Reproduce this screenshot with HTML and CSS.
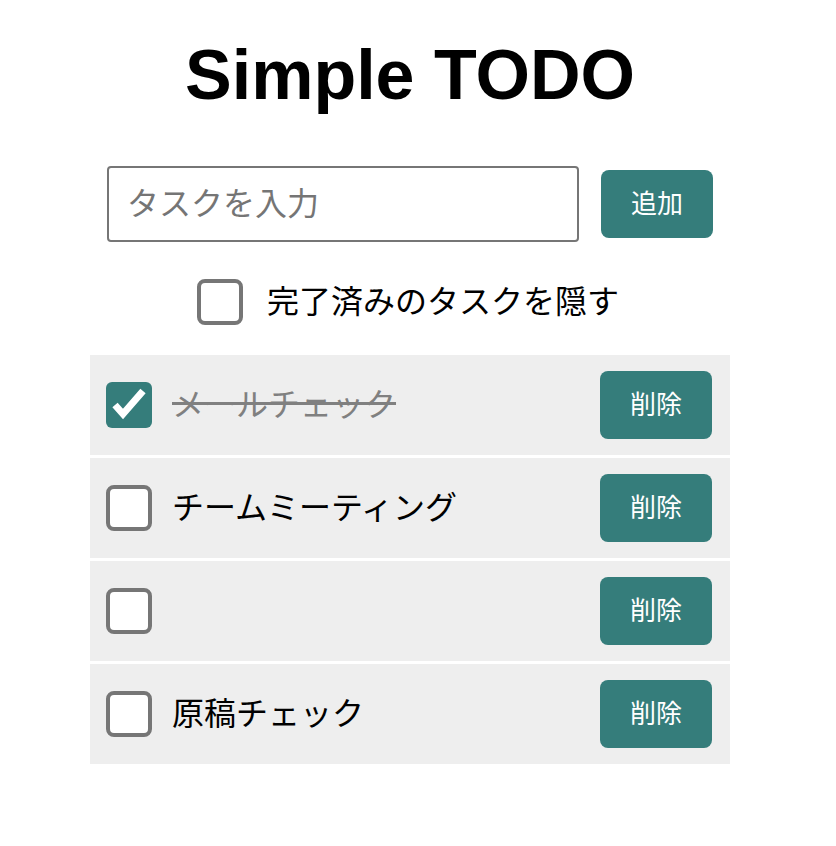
FILE: index.html
```html
<!DOCTYPE html>
<html lang="ja">
<head>
<meta charset="utf-8">
<title>Simple TODO</title>
<link rel="stylesheet" href="styles.css">
</head>
<body>
<div class="page">
  <h1 class="title">Simple TODO</h1>
  <form class="add-row">
    <input class="task-input" type="text" placeholder="タスクを入力">
    <button class="btn" type="button">追加</button>
  </form>
  <label class="hide-row">
    <span class="box"></span>
    <span class="hide-label">完了済みのタスクを隠す</span>
  </label>
  <ul class="list">
    <li class="item">
      <span class="box checked">
        <svg viewBox="0 0 46 46" width="46" height="46"><polyline points="9,23 17,32 37,9" fill="none" stroke="#fff" stroke-width="7" stroke-linejoin="miter"/></svg>
      </span>
      <span class="item-text done">メールチェック</span>
      <button class="btn" type="button">削除</button>
    </li>
    <li class="item">
      <span class="box"></span>
      <span class="item-text">チームミーティング</span>
      <button class="btn" type="button">削除</button>
    </li>
    <li class="item">
      <span class="box"></span>
      <span class="item-text"></span>
      <button class="btn" type="button">削除</button>
    </li>
    <li class="item">
      <span class="box"></span>
      <span class="item-text">原稿チェック</span>
      <button class="btn" type="button">削除</button>
    </li>
  </ul>
</div>
</body>
</html>
```

FILE: styles.css
```css
html, body {
  margin: 0;
  padding: 0;
  background: #ffffff;
}
body {
  font-family: "Noto Sans CJK JP", "Noto Sans", sans-serif;
  color: #000;
}
.page {
  width: 820px;
  display: flex;
  flex-direction: column;
  align-items: center;
}
.title {
  margin: 35px 0 0;
  font-family: "Liberation Sans", Arial, sans-serif;
  font-weight: bold;
  font-size: 70px;
  line-height: 80px;
  height: 80px;
}
.add-row {
  margin: 51px 0 0;
  display: flex;
  align-items: center;
  gap: 22px;
}
.task-input {
  box-sizing: border-box;
  width: 472px;
  height: 76px;
  border: 2px solid #767676;
  border-radius: 4px;
  padding: 0 18px 6px;
  font-family: "Noto Sans CJK JP", sans-serif;
  font-size: 32px;
  outline: none;
}
.task-input::placeholder {
  color: #757575;
}
.btn {
  box-sizing: border-box;
  width: 112px;
  height: 68px;
  border: none;
  border-radius: 8px;
  background: #357d7b;
  color: #fff;
  font-family: "Noto Sans CJK JP", sans-serif;
  font-size: 26px;
  padding: 0 0 5px;
  cursor: pointer;
}
.hide-row {
  margin-top: 37px;
  display: flex;
  align-items: center;
  gap: 24px;
  height: 46px;
  margin-left: -4px;
}
.box {
  box-sizing: border-box;
  width: 46px;
  height: 46px;
  border: 4px solid #767676;
  border-radius: 8px;
  background: #fff;
  flex: none;
  display: block;
}
.box.checked {
  border: none;
  background: #357d7b;
  border-radius: 6px;
}
.box svg {
  display: block;
}
.hide-label {
  font-size: 32px;
  line-height: 46px;
  padding-bottom: 6px;
}
.list {
  list-style: none;
  margin: 30px 0 0;
  padding: 0;
  width: 640px;
  display: flex;
  flex-direction: column;
  gap: 3px;
}
.item {
  box-sizing: border-box;
  height: 100px;
  background: #eeeeee;
  display: flex;
  align-items: center;
  padding: 0 18px 0 16px;
  gap: 22px;
}
.item-text {
  flex: 1;
  font-size: 32px;
  line-height: 46px;
  padding-bottom: 6px;
  margin-left: -2px;
}
.item-text.done {
  color: #808080;
  text-decoration: line-through;
  text-decoration-thickness: 3px;
}
```
